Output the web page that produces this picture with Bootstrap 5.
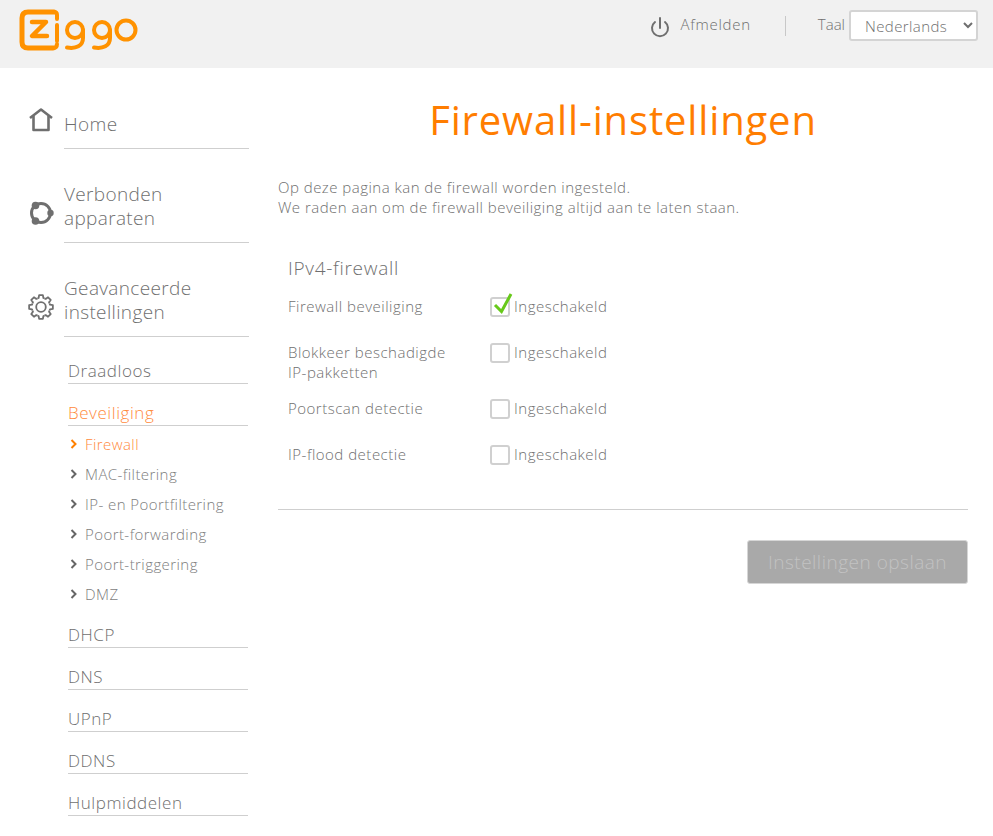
<!DOCTYPE html>
<html lang="nl">

<head>
    <meta charset="UTF-8">
    <meta name="viewport" content="width=device-width, initial-scale=1.0">
    <title>Firewall-instellingen</title>
    <link href="https://cdn.jsdelivr.net/npm/bootstrap@5.3.2/dist/css/bootstrap.min.css" rel="stylesheet">
    <style>
        body { font-family: "Open Sans", "Liberation Sans", sans-serif; font-weight: 300; color: #6f6f6f; }
        .top-bar { height: 68px; background: #f1f1f1; }
        .logo-svg { width: 120px; height: 44px; margin-left: 18px; margin-top: 8px; }
        .top-right { margin-top: 10px; }
        .power-svg { margin-right: 10px; margin-top: 3px; }
        .top-link { font-size: 15px; letter-spacing: .75px; color: #6f6f6f; text-decoration: none; margin-bottom: 2px; }
        .top-label { font-size: 15px; margin-bottom: 2px; }
        .top-sep { width: 1px; height: 20px; background: #c8c8c8; margin: 0 32px 0 34px; }
        .lang-select { width: 129px; height: 31px; padding: 0 0 0 10px; font-family: inherit; font-size: 15px; letter-spacing: .4px; font-weight: 300; color: #6f6f6f; border: 2px solid #d4d4d4; border-radius: 3px; background-color: #fff; margin-left: 4px; margin-right: 15px; }
        .side-col { width: 278px; flex: none; padding: 44px 0 20px 28px; }
        .main-nav { display: flex; align-items: center; }
        .main-nav svg { width: 26px; height: 26px; flex: none; margin-right: 10px; }
        .main-nav a { display: block; width: 185px; font-size: 19px; letter-spacing: .35px; line-height: 24px; color: #6f6f6f; text-decoration: none; border-bottom: 1px solid #cfcfcf; padding-bottom: 12px; }
        .main-gap { margin-bottom: 33px; }
        .main-last { margin-bottom: 23px; }
        .main-nav .home-svg { align-self: flex-start; margin-top: -5px; }
        .sub-head { display: block; width: 180px; margin-left: 40px; font-size: 17px; letter-spacing: .55px; line-height: 22px; color: #6f6f6f; text-decoration: none; border-bottom: 1px solid #cfcfcf; margin-bottom: 18px; height: 24px; }
        .sub-head.is-open { color: #ff8a3c; margin-bottom: 3px; }
        .sub-list { list-style: none; margin: 0 0 15px 42px; padding: 0; }
        .sub-list li { display: flex; align-items: center; height: 30px; font-size: 15px; letter-spacing: .43px; }
        .sub-list li svg { width: 7px; height: 10px; margin-right: 8px; flex: none; }
        .sub-list a { color: #7d7d7d; text-decoration: none; }
        .sub-list .is-current a { color: #ff8a3c; }
        .main-col { width: 690px; flex: none; }
        .page-title { font-size: 40px; font-weight: 400; line-height: 46px; letter-spacing: .85px; color: #ff7d00; text-align: center; margin: 29px 0 34px; }
        .intro-text { font-size: 15px; letter-spacing: .48px; line-height: 20px; margin-bottom: 39px; }
        .section-title { font-size: 19px; letter-spacing: .7px; font-weight: 300; line-height: 24px; color: #6f6f6f; margin: 0 0 16px 10px; }
        .fw-row { display: flex; margin-left: 10px; margin-bottom: 26px; font-size: 15px; letter-spacing: .5px; line-height: 20px; }
        .fw-row.is-tall { margin-bottom: 16px; }
        .fw-row.is-last { margin-bottom: 0; }
        .fw-label { width: 202px; flex: none; }
        .fw-box { width: 20px; height: 20px; flex: none; margin: 1px 4px -1px 0; border: 2px solid #d0d0d0; border-radius: 3px; background: #fff; position: relative; }
        .fw-box svg { position: absolute; left: 0; top: -9px; width: 22px; height: 26px; }
        .fw-rule { border: 0; border-top: 1px solid #cfcfcf; opacity: 1; margin: 45px 25px 30px 0; width: 690px; }
        .save-btn, .save-btn:disabled { display: block; width: 221px; height: 44px; margin-left: auto; font-size: 19px; letter-spacing: .5px; font-weight: 300; color: #c2c2c2; background: #a9a9a9; border: 1px solid #d6d6d6; border-radius: 3px; opacity: 1; }
    </style>
</head>

<body>
    <header class="top-bar d-flex align-items-start justify-content-between">
        <svg class="logo-svg" viewBox="0 0 120 44" role="img" aria-label="Ziggo" fill="none" stroke="#ff9200" stroke-width="4" stroke-linecap="round" stroke-linejoin="round">
            <path d="M36 4H10Q4 4 4 10V34Q4 40 10 40H35" stroke-width="5"/>
            <path d="M36 4Q39 4 39 7V11M35 40Q39 40 39 36"/>
            <path d="M14 14H28L14 28H29" stroke-width="4.5"/>
            <path d="M39 17V33"/>
            <circle cx="57" cy="22" r="8"/>
            <path d="M65 22V30C65 38 58 41 49 39.5"/>
            <circle cx="84" cy="22" r="8"/>
            <path d="M92 22V30C92 38 85 41 76 39.5"/>
            <circle cx="108" cy="22" r="9.5"/>
        </svg>
        <div class="top-right d-flex align-items-center">
            <svg class="power-svg" width="20" height="22" viewBox="0 0 20 22" fill="none" stroke="#6f6f6f" stroke-width="2" stroke-linecap="round">
                <path d="M10 2v10"/>
                <path d="M5 6a8 8 0 1 0 10 0"/>
            </svg>
            <a class="top-link" href="#">Afmelden</a>
            <span class="top-sep"></span>
            <span class="top-label">Taal</span>
            <select class="lang-select">
                <option>Nederlands</option>
            </select>
        </div>
    </header>

    <div class="d-flex">
        <!-- Side menu -->
        <nav class="side-col">
            <div class="main-nav main-gap">
                <svg class="home-svg" viewBox="0 0 26 26" fill="none" stroke="#6f6f6f" stroke-width="2.6" stroke-linejoin="round">
                    <path d="M2 11 13 2.5l11 8.5"/>
                    <path d="M5.5 9v14h15V9"/>
                </svg>
                <a href="#">Home</a>
            </div>
            <div class="main-nav main-gap">
                <svg viewBox="0 0 26 26" fill="none" stroke="#6f6f6f" stroke-width="3">
                    <circle cx="13" cy="13" r="9.5"/>
                    <circle cx="7.5" cy="5.5" r="3.8" fill="#6f6f6f" stroke="none"/>
                    <circle cx="22.5" cy="13" r="3.2" fill="#6f6f6f" stroke="none"/>
                    <circle cx="7.5" cy="21" r="3.8" fill="#6f6f6f" stroke="none"/>
                </svg>
                <a href="#">Verbonden<br>apparaten</a>
            </div>
            <div class="main-nav main-last">
                <svg viewBox="0 0 26 26" fill="none" stroke="#6f6f6f" stroke-width="1.8" stroke-linejoin="round">
                    <defs>
                        <path id="gear-tooth" d="M9.44 4.41 10.59 4.02 11.12 1.15H14.88L15.41 4.02 16.56 4.41"/>
                    </defs>
                    <circle cx="13" cy="13" r="4.8"/>
                    <use href="#gear-tooth"/>
                    <use href="#gear-tooth" transform="rotate(45 13 13)"/>
                    <use href="#gear-tooth" transform="rotate(90 13 13)"/>
                    <use href="#gear-tooth" transform="rotate(135 13 13)"/>
                    <use href="#gear-tooth" transform="rotate(180 13 13)"/>
                    <use href="#gear-tooth" transform="rotate(225 13 13)"/>
                    <use href="#gear-tooth" transform="rotate(270 13 13)"/>
                    <use href="#gear-tooth" transform="rotate(315 13 13)"/>
                </svg>
                <a href="#">Geavanceerde<br>instellingen</a>
            </div>

            <a class="sub-head" href="#">Draadloos</a>
            <a class="sub-head is-open" href="#">Beveiliging</a>
            <ul class="sub-list">
                <li class="is-current"><svg viewBox="0 0 7 10" fill="none" stroke="#ff8000" stroke-width="2"><path d="M1.5 1l4 4-4 4"/></svg><a href="#">Firewall</a></li>
                <li><svg viewBox="0 0 7 10" fill="none" stroke="#666" stroke-width="2"><path d="M1.5 1l4 4-4 4"/></svg><a href="#">MAC-filtering</a></li>
                <li><svg viewBox="0 0 7 10" fill="none" stroke="#666" stroke-width="2"><path d="M1.5 1l4 4-4 4"/></svg><a href="#">IP- en Poortfiltering</a></li>
                <li><svg viewBox="0 0 7 10" fill="none" stroke="#666" stroke-width="2"><path d="M1.5 1l4 4-4 4"/></svg><a href="#">Poort-forwarding</a></li>
                <li><svg viewBox="0 0 7 10" fill="none" stroke="#666" stroke-width="2"><path d="M1.5 1l4 4-4 4"/></svg><a href="#">Poort-triggering</a></li>
                <li><svg viewBox="0 0 7 10" fill="none" stroke="#666" stroke-width="2"><path d="M1.5 1l4 4-4 4"/></svg><a href="#">DMZ</a></li>
            </ul>
            <a class="sub-head" href="#">DHCP</a>
            <a class="sub-head" href="#">DNS</a>
            <a class="sub-head" href="#">UPnP</a>
            <a class="sub-head" href="#">DDNS</a>
            <a class="sub-head mb-0" href="#">Hulpmiddelen</a>
        </nav>

        <!-- Firewall settings -->
        <main class="main-col">
            <h1 class="page-title">Firewall-instellingen</h1>
            <p class="intro-text">Op deze pagina kan de firewall worden ingesteld.<br>We raden aan om de firewall beveiliging altijd aan te laten staan.</p>
            <h2 class="section-title">IPv4-firewall</h2>
            <div class="fw-row">
                <span class="fw-label">Firewall beveiliging</span>
                <span class="fw-box"><svg viewBox="0 0 22 26" fill="none" stroke="#67c91a" stroke-width="3"><path d="M3 15l6.5 6.5L19 4"/></svg></span>
                <span>Ingeschakeld</span>
            </div>
            <div class="fw-row is-tall">
                <span class="fw-label">Blokkeer beschadigde<br>IP-pakketten</span>
                <span class="fw-box"></span>
                <span>Ingeschakeld</span>
            </div>
            <div class="fw-row">
                <span class="fw-label">Poortscan detectie</span>
                <span class="fw-box"></span>
                <span>Ingeschakeld</span>
            </div>
            <div class="fw-row is-last">
                <span class="fw-label">IP-flood detectie</span>
                <span class="fw-box"></span>
                <span>Ingeschakeld</span>
            </div>
            <hr class="fw-rule">
            <button class="btn save-btn" type="button" disabled>Instellingen opslaan</button>
        </main>
    </div>
</body>

</html>
